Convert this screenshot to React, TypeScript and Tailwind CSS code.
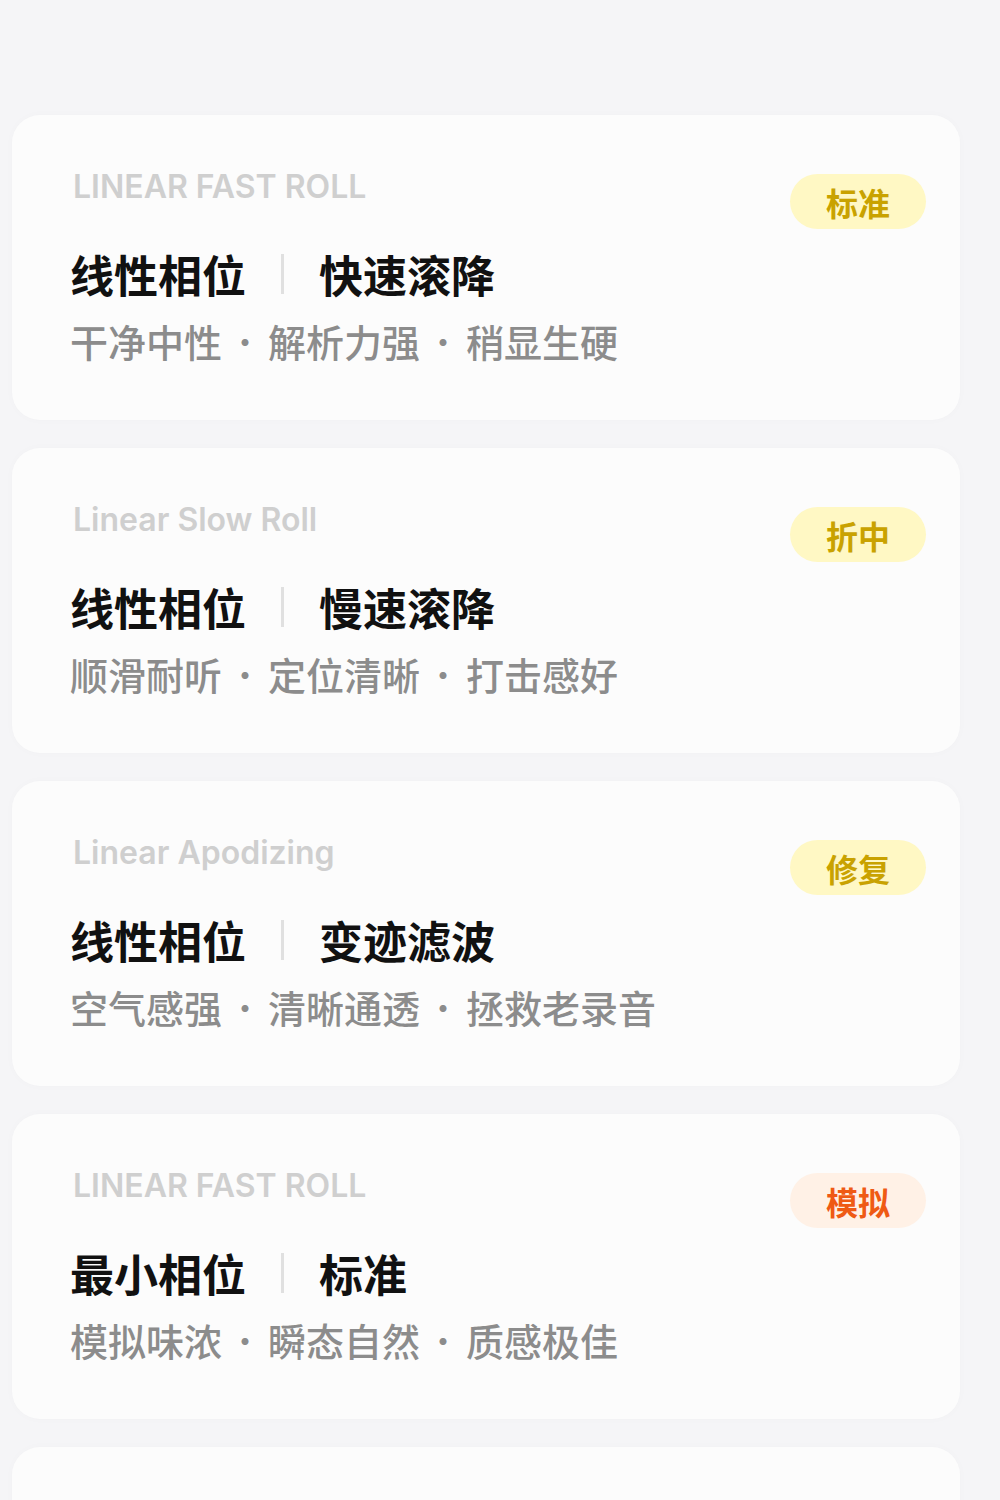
import React from "react";

type Item = {
  label: string;
  a: string;
  b: string;
  tags: string[];
  badge: string;
  tone: "yellow" | "orange";
};

const items: Item[] = [
  { label: "LINEAR FAST ROLL", a: "线性相位", b: "快速滚降", tags: ["干净中性", "解析力强", "稍显生硬"], badge: "标准", tone: "yellow" },
  { label: "Linear Slow Roll", a: "线性相位", b: "慢速滚降", tags: ["顺滑耐听", "定位清晰", "打击感好"], badge: "折中", tone: "yellow" },
  { label: "Linear Apodizing", a: "线性相位", b: "变迹滤波", tags: ["空气感强", "清晰通透", "拯救老录音"], badge: "修复", tone: "yellow" },
  { label: "LINEAR FAST ROLL", a: "最小相位", b: "标准", tags: ["模拟味浓", "瞬态自然", "质感极佳"], badge: "模拟", tone: "orange" },
];

const cjk = { fontFamily: '"Noto Sans CJK SC", "Noto Sans", sans-serif' };
const latin = { fontFamily: 'Inter, "Noto Sans", sans-serif' };

function Card({ item }: { item: Item }) {
  return (
    <div className="flex h-[305px] shrink-0 rounded-[28px] bg-[#fcfcfc] pl-[61px] pr-[34px] pt-[52px] shadow-[0_0_10px_rgba(0,0,0,0.02)]">
      <div className="flex flex-1 flex-col">
        <div className="text-[32px] font-semibold leading-[40px] text-[#cfcfcf]" style={latin}>
          {item.label}
        </div>
        <div className="-ml-[3px] mt-[39px] flex items-center text-[44px] font-bold leading-[56px] text-[#111111]" style={cjk}>
          <span>{item.a}</span>
          <span className="mx-[35px] h-[40px] w-[3px] bg-[#e0e0e0]" />
          <span>{item.b}</span>
        </div>
        <div className="-ml-[3px] mt-[15px] flex items-center text-[38px] font-medium leading-[48px] text-[#8c8c8c]" style={cjk}>
          {item.tags.map((t, i) => (
            <React.Fragment key={i}>
              {i > 0 && <span className="w-[46px] text-center text-[30px]">·</span>}
              <span>{t}</span>
            </React.Fragment>
          ))}
        </div>
      </div>
      <div
        className={
          "mt-[7px] flex h-[55px] w-[136px] items-center justify-center rounded-full text-[32px] font-bold " +
          (item.tone === "yellow" ? "bg-[#fff8c4] text-[#c9a200]" : "bg-[#fff1e6] text-[#ef5a14]")
        }
        style={cjk}
      >
        {item.badge}
      </div>
    </div>
  );
}

export default function App() {
  return (
    <div className="flex min-h-[1500px] flex-col gap-[28px] bg-[#f5f5f7] pl-[12px] pr-[40px] pt-[115px]">
      {items.map((it, i) => (
        <Card key={i} item={it} />
      ))}
      <div className="h-[305px] shrink-0 rounded-[28px] bg-[#fcfcfc] shadow-[0_0_10px_rgba(0,0,0,0.02)]" />
    </div>
  );
}
